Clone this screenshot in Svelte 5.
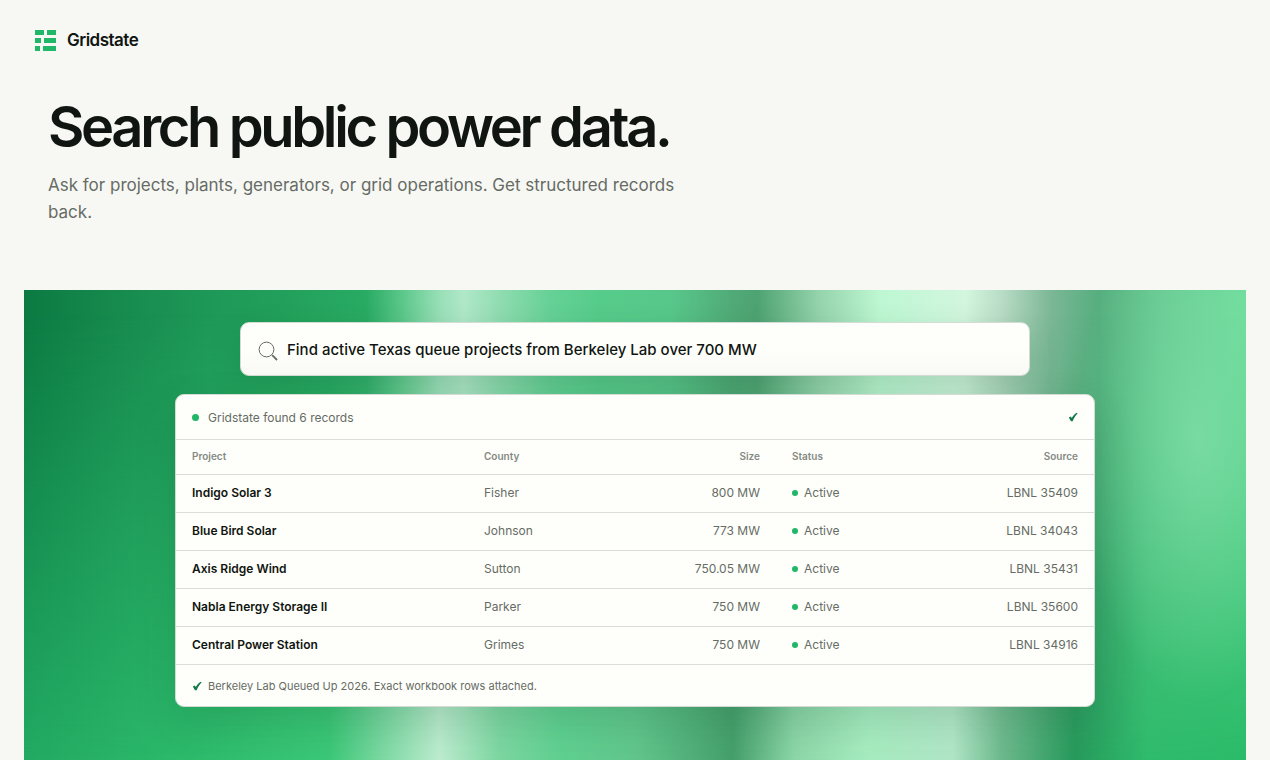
<script lang="ts">
  type Row = { project: string; county: string; size: string; status: string; source: string };

  const rows: Row[] = [
    { project: 'Indigo Solar 3', county: 'Fisher', size: '800 MW', status: 'Active', source: 'LBNL 35409' },
    { project: 'Blue Bird Solar', county: 'Johnson', size: '773 MW', status: 'Active', source: 'LBNL 34043' },
    { project: 'Axis Ridge Wind', county: 'Sutton', size: '750.05 MW', status: 'Active', source: 'LBNL 35431' },
    { project: 'Nabla Energy Storage II', county: 'Parker', size: '750 MW', status: 'Active', source: 'LBNL 35600' },
    { project: 'Central Power Station', county: 'Grimes', size: '750 MW', status: 'Active', source: 'LBNL 34916' }
  ];

  let query = $state('Find active Texas queue projects from Berkeley Lab over 700 MW');
</script>

{#snippet check()}
  <svg class="check" viewBox="0 0 12 12" aria-hidden="true">
    <path d="M1 6.500 3.300 5.400 4.500 7.200C6 4.600 8 2.200 10.400.800L11.600 1.700C9 4 7 7.200 5.600 11L3.500 11Z" />
  </svg>
{/snippet}

<div class="page">
  <header>
    <a class="brand" href="/">
      <svg viewBox="0 0 21 21" aria-hidden="true">
        <path d="M0 0h9v5H0zM12 0h9v5h-9zM0 8h6v5H0zM9 8h12v5H9zM0 16h5v5H0zM8 16h13v5H8z" />
      </svg>
      Gridstate
    </a>
  </header>

  <main>
    <section class="intro">
      <h1>Search public power data.</h1>
      <p>Ask for projects, plants, generators, or grid operations. Get structured records back.</p>
    </section>

    <section class="demo" aria-label="Example search">
      <label class="search">
        <svg viewBox="0 0 20 20" aria-hidden="true">
          <circle cx="8.500" cy="8.500" r="7.400" />
          <path d="m14.200 14.200 4.800 4.800" />
        </svg>
        <input type="text" aria-label="Search query" bind:value={query} />
      </label>

      <div class="results">
        <div class="summary">
          <span class="dot"></span>
          <span>Gridstate found 6 records</span>
          {@render check()}
        </div>

        <table>
          <thead>
            <tr>
              <th class="project">Project</th>
              <th>County</th>
              <th class="end">Size</th>
              <th>Status</th>
              <th class="end source">Source</th>
            </tr>
          </thead>
          <tbody>
            {#each rows as row}
              <tr>
                <td class="project">{row.project}</td>
                <td>{row.county}</td>
                <td class="end">{row.size}</td>
                <td><span class="status">{row.status}</span></td>
                <td class="end">{row.source}</td>
              </tr>
            {/each}
          </tbody>
        </table>

        <div class="note">
          {@render check()}
          <span>Berkeley Lab Queued Up 2026. Exact workbook rows attached.</span>
        </div>
      </div>
    </section>
  </main>
</div>

<style>
  :global(body) {
    margin: 0;
    background: #f7f8f3;
  }

  .page {
    --ink: #101511;
    --muted: #666b66;
    --line: #d9dcd8;
    --green: #20b768;
    display: flex;
    flex-direction: column;
    box-sizing: border-box;
    min-height: 100vh;
    padding: 0 24px;
    color: var(--ink);
    font-family: Inter, 'Liberation Sans', sans-serif;
  }

  header {
    display: flex;
    align-items: center;
    height: 80px;
    padding: 0 11px;
  }

  .brand {
    display: flex;
    align-items: center;
    gap: 11px;
    color: inherit;
    font-size: 17px;
    font-weight: 600;
    letter-spacing: -0.03em;
    text-decoration: none;
  }

  .brand svg {
    width: 21px;
    height: 21px;
    fill: var(--green);
  }

  main {
    display: flex;
    flex: 1;
    flex-direction: column;
  }

  .intro {
    max-width: 640px;
    padding: 16px 24px 64px;
  }

  h1 {
    margin: 0 0 14px;
    font-size: 56px;
    font-weight: 600;
    line-height: 62px;
    letter-spacing: -0.06em;
  }

  p {
    margin: 0;
    color: var(--muted);
    font-size: 17px;
    line-height: 27px;
  }

  .demo {
    position: relative;
    isolation: isolate;
    display: flex;
    flex: 1;
    flex-direction: column;
    align-items: center;
    gap: 18px;
    padding: 32px 24px 53px;
    background: linear-gradient(
      to right,
      #0b7a42 0%,
      #16894d 7%,
      #1e9857 15%,
      #22a05b 21%,
      #29ab64 28%,
      #5cc88a 31%,
      #98dfb7 34%,
      #b0e8c8 36%,
      #8fdcb0 39%,
      #66d196 43%,
      #56cc8a 47%,
      #58c78a 53%,
      #50aa77 58%,
      #4ea372 60%,
      #94d3ab 65%,
      #bdf7d2 70%,
      #d2f6de 77%,
      #b9dcc6 80%,
      #7cb796 84%,
      #55ae7e 88%,
      #62c68d 93%,
      #6cdc9a 100%
    );
  }

  /* second light field, strongest along the bottom edge */
  .demo::before {
    content: '';
    position: absolute;
    z-index: -1;
    inset: 0;
    background: linear-gradient(
      to right,
      #22a962 0%,
      #2dbb6c 14%,
      #3cc878 25%,
      #78d8a0 29%,
      #bdeccf 34%,
      #7bd6a0 39%,
      #5fd090 44%,
      #62c68c 50%,
      #459f6b 58%,
      #8cd6a8 63%,
      #a6ecc0 69%,
      #b0e6c6 76%,
      #6cb98c 80%,
      #269a5b 86%,
      #2fbb6c 92%,
      #2abb68 100%
    );
    mask-image: linear-gradient(to bottom, transparent 5%, #000);
  }

  .demo::after {
    content: '';
    position: absolute;
    z-index: -1;
    inset: 0;
    background: radial-gradient(ellipse 120px 260px at 96% 32%, rgb(135 226 173 / 70%), rgb(135 226 173 / 30%) 55%, transparent);
  }

  .search,
  .results {
    box-sizing: border-box;
    width: 100%;
    border: 1px solid #d3dbd3;
    border-radius: 9px;
    background: #fefffa;
  }

  .search {
    display: flex;
    align-items: center;
    gap: 9px;
    max-width: 790px;
    height: 54px;
    padding: 0 17px;
    background: linear-gradient(#fefffa 50%, #f9faf6);
    box-shadow: 0 12px 32px rgb(10 60 35 / 16%);
  }

  .search svg {
    flex: none;
    width: 20px;
    height: 20px;
    margin-top: 4px;
    fill: none;
    stroke: var(--muted);
    stroke-width: 1;
  }

  .search svg path {
    stroke-width: 1.800;
  }

  .search input {
    flex: 1;
    min-width: 0;
    padding: 0;
    border: 0;
    outline: 0;
    background: transparent;
    color: inherit;
    font: inherit;
    font-size: 15px;
    font-weight: 500;
  }

  .results {
    max-width: 920px;
    overflow: hidden;
    color: var(--muted);
    font-size: 12px;
    box-shadow: 0 16px 40px rgb(10 60 35 / 16%);
  }

  .summary {
    display: flex;
    align-items: center;
    gap: 9px;
    height: 44px;
    padding: 0 16px;
  }

  .dot {
    width: 7px;
    height: 7px;
    border-radius: 50%;
    background: var(--green);
  }

  .check {
    width: 10px;
    height: 10px;
    fill: #147a4c;
  }

  .summary .check {
    margin-left: auto;
  }

  table {
    width: 100%;
    border-collapse: separate;
    border-spacing: 0;
    table-layout: fixed;
  }

  th,
  td {
    box-sizing: border-box;
    width: 154px;
    height: 38px;
    padding: 0 16px 2px;
    border-top: 1px solid var(--line);
    text-align: left;
    white-space: nowrap;
  }

  th {
    height: 35px;
    color: #858a84;
    font-size: 10px;
    font-weight: 600;
  }

  th.project {
    width: auto;
  }

  th.source {
    width: 164px;
  }

  td.project {
    color: var(--ink);
    font-weight: 600;
  }

  .end,
  th.end {
    text-align: right;
  }

  .status {
    display: flex;
    align-items: center;
    gap: 6px;
  }

  .status::before {
    content: '';
    width: 6px;
    height: 6px;
    border-radius: 50%;
    background: var(--green);
  }

  .note {
    display: flex;
    align-items: center;
    gap: 6px;
    height: 41px;
    padding: 0 16px;
    border-top: 1px solid var(--line);
    font-size: 11px;
  }
</style>
